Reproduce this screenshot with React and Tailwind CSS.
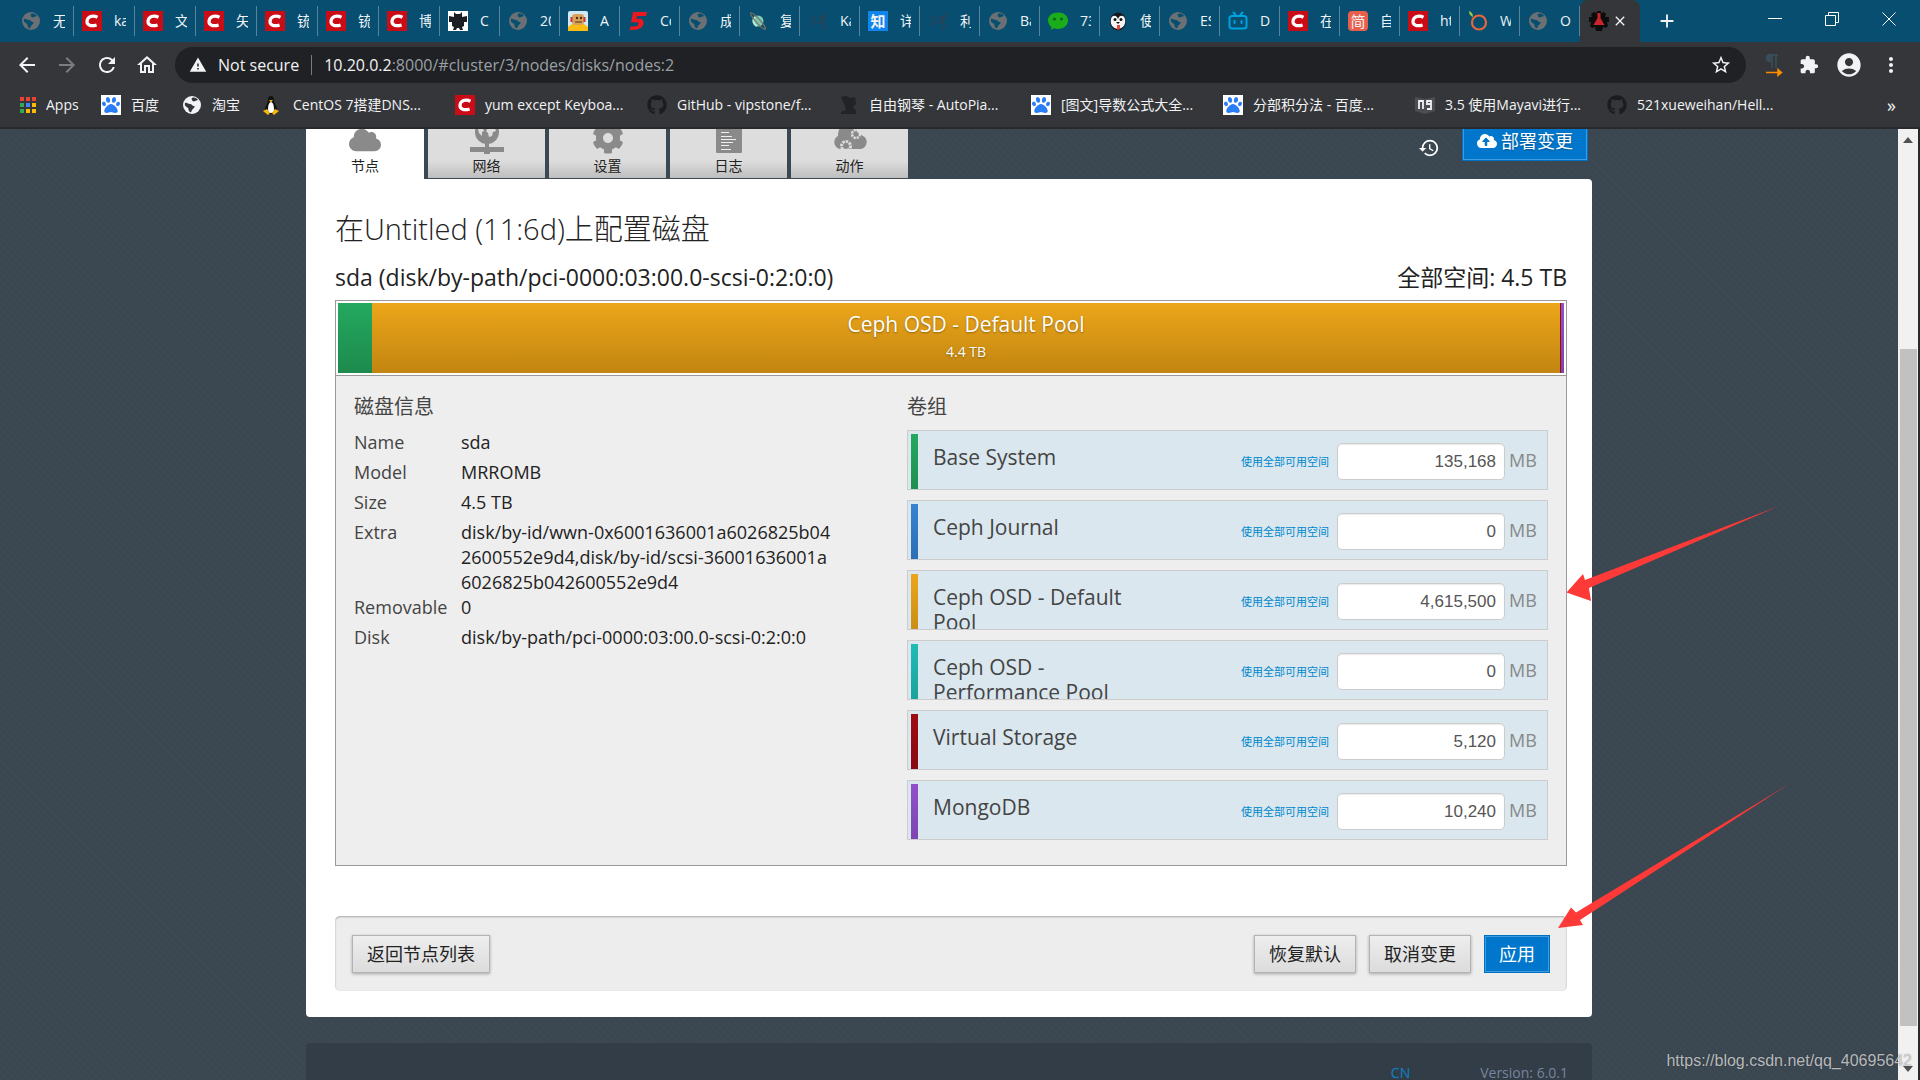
import React, { useState } from 'react';
import { FaCloud, FaCloudUploadAlt, FaCog, FaGithub, FaPaw } from 'react-icons/fa';
import {
  MdArrowBack, MdArrowForward, MdRefresh, MdOutlineHome, MdWarning, MdStarBorder, MdMoreVert,
  MdAccountCircle, MdAdd, MdClose, MdExtension, MdHistory,
} from 'react-icons/md';

/* ---------- favicons ---------- */

const Globe = ({ light }) => (
  <svg viewBox="0 0 20 20" className="h-5 w-5 shrink-0">
    <circle cx="10" cy="10" r="9" fill={light ? '#f1f3f4' : '#6b7074'} />
    <path
      d="M3 8c2-1 3 1 5 1s2 2 4 2-1 3-2 4 0 3-2 2-1-3-2-4-4-2-3-5zM10 3c2-1 5 0 6 2l-3 1c-1 1-3 0-3-1s-1-1 0-2z"
      fill={light ? '#35363a' : '#074e70'}
    />
  </svg>
);

const RedC = () => (
  <svg viewBox="0 0 20 20" className="h-5 w-5 shrink-0">
    <rect width="20" height="20" fill="#ca0c16" />
    <path d="M15.5 6.2C10.500 3.800 5.500 5.500 5 10.200c-.3 4 4 5.600 9.600 3.700" fill="none" stroke="#fff" strokeWidth="3.200" />
  </svg>
);

const Baidu = () => (
  <span className="flex h-5 w-5 shrink-0 items-center justify-center bg-white">
    <FaPaw className="h-[18px] w-[18px] text-[#2b7df3]" />
  </span>
);

const Bat = () => (
  <svg viewBox="0 0 20 20" className="h-5 w-5 shrink-0">
    <rect width="20" height="20" fill="#fff" />
    <path d="M6 1l2 2h4l2-2 0 5 5-1 0 6-3 0 0 4-2 1 1 3h-3l-1-2h-2l-1 2H5l1-3-2-1 0-4-3 0 0-6 5 1z" fill="#1b1f23" />
  </svg>
);

const Robot = () => (
  <svg viewBox="0 0 20 20" className="h-5 w-5 shrink-0">
    <rect width="20" height="20" rx="2" fill="#cfe9f7" />
    <path d="M0 20v-4l4-3h12l4 3v4z" fill="#fbbc13" />
    <rect x="4" y="3" width="12" height="11" rx="3" fill="#d9a35b" />
    <rect x="2.500" y="6" width="2" height="5" fill="#c33" />
    <rect x="15.500" y="6" width="2" height="5" fill="#c33" />
    <circle cx="9" cy="7" r="1.200" fill="#4a2f13" />
    <circle cx="13" cy="7" r="1.200" fill="#4a2f13" />
    <path d="M7 11h7" stroke="#4a2f13" />
  </svg>
);

const Five = () => (
  <svg viewBox="0 0 20 20" className="h-5 w-5 shrink-0">
    <path d="M5 1h14l-1 4H9l-.5 3c5-1 8 1 7 5-1 4-5 6-14 6l1-3.500c5 0 7.500-.5 8-2.500.4-2-2-2-7.500-1.500z" fill="#e8191f" />
  </svg>
);

const Saturn = () => (
  <svg viewBox="0 0 20 20" className="h-5 w-5 shrink-0">
    <circle cx="10" cy="10" r="5.500" fill="#7cc9b5" />
    <path d="M7 6a5.500 5.500 0 0 0 2 9" stroke="#b9e8d6" strokeWidth="2" fill="none" />
    <ellipse cx="10" cy="10" rx="11" ry="2" transform="rotate(48 10 10)" fill="none" stroke="#7d7360" strokeWidth="1.200" />
  </svg>
);

const Squiggle = () => (
  <svg viewBox="0 0 20 20" className="h-5 w-5 shrink-0">
    <path d="M3 8c1-3 3-2 3 1s-1 5-4 4M9 12c3 0 7-1 7-4s-4-4-4-1 5 2 6-5M15 11c2 3 2 7-2 7" fill="none" stroke="#2b4355" strokeWidth="1.500" />
  </svg>
);

const Husky = () => (
  <svg viewBox="0 0 20 20" className="h-5 w-5 shrink-0">
    <ellipse cx="10" cy="10.500" rx="8" ry="9" fill="#16181b" />
    <path d="M3 8c1-4 4-4 6-2l1 2 1-2c2-2 5-2 6 2 1 5-1 9-7 10C4 17 2 13 3 8z" fill="#f4f4f4" />
    <circle cx="7" cy="8.500" r="1.500" fill="#111" />
    <circle cx="13" cy="8.500" r="1.500" fill="#111" />
    <path d="M8 11h4l-2 2z" fill="#111" />
    <path d="M9 14h3v4c-1 1-3 1-3 0z" fill="#e8453c" />
  </svg>
);

const Bili = () => (
  <svg viewBox="0 0 20 20" className="h-5 w-5 shrink-0" fill="none" stroke="#00a1e0" strokeWidth="2" strokeLinecap="round">
    <rect x="1.500" y="5" width="17" height="12.500" rx="2.500" />
    <path d="M5.500 1.500L8 4.500M14.500 1.500L12 4.500M6.500 10v2M13.500 10v2" />
  </svg>
);

const Orange = () => (
  <svg viewBox="0 0 20 20" className="h-5 w-5 shrink-0">
    <circle cx="11" cy="11.500" r="7" fill="none" stroke="#e8663c" strokeWidth="2.200" />
    <path d="M1 0c3 1 4 3 4 6C2 5 1 3 1 0z" fill="#9bc53d" />
  </svg>
);

const Penguin = () => (
  <svg viewBox="0 0 20 20" className="h-5 w-5 shrink-0">
    <path d="M8 1c-3 0-3 3-3 5s-3 5-3 8 2 5 6 5 6-2 6-5-3-6-3-8 0-5-3-5z" fill="#111" />
    <path d="M8 7c-2 0-3 4-3 7s1 4 3 4 3-1 3-4-1-7-3-7z" fill="#fff" />
    <path d="M6 5h4L8 7.500zM0 16l4-2 3 4-2 2zM16 16l-4-2-3 4 2 2z" fill="#f5b90a" />
  </svg>
);

const Piano = () => (
  <svg viewBox="0 0 20 20" className="h-5 w-5 shrink-0">
    <path d="M2 2c4-2 7-1 9 1l5-1 1 7-3 3 3 4v3H2v-2l5-2-1-4z" fill="#222326" />
  </svg>
);

const Book = () => (
  <svg viewBox="0 0 20 20" className="h-5 w-5 shrink-0">
    <path d="M0 2l10 2 10-2v14l-10 3-10-3z" fill="#4d4e52" />
    <path d="M4 14V6h4v8M16 9h-4V6h4v8h-4" fill="none" stroke="#f1f1f1" strokeWidth="1.800" />
  </svg>
);

const Flask = () => (
  <svg viewBox="0 0 20 20" className="h-5 w-5 shrink-0">
    <path d="M8 0h4v2l3-1 2 2-1 3h4v5h-2l1 4-2 2-3-1-1 4H7l-1-4-3 1-2-2 1-4H0V6h3L2 3l3-2 3 1z" fill="#0c0c0c" />
    <path d="M8.500 2h3v5l4 7h-11l4-7z" fill="#c9252c" />
  </svg>
);

const WeChat = () => (
  <svg viewBox="0 0 20 20" className="h-5 w-5 shrink-0">
    <path d="M10 1.500c6 0 10 3.500 10 8s-4 8.500-10 8.500c-1.500 0-3-.2-4-.7L3 19l.5-3C1.500 14.500 0 12 0 9.500c0-4.500 4-8 10-8z" fill="#1aad19" />
    <circle cx="6.500" cy="8" r="1.500" fill="#0b5d2a" />
    <circle cx="13.500" cy="8" r="1.500" fill="#0b5d2a" />
  </svg>
);

const Zhi = () => <span className="flex h-5 w-5 shrink-0 items-center justify-center bg-[#1185ee] text-[15px] font-bold">知</span>;
const Jian = () => <span className="flex h-5 w-5 shrink-0 items-center justify-center rounded-sm bg-[#e8604c] text-[15px]">简</span>;
const GitHub = () => <FaGithub className="h-5 w-5 shrink-0 text-[#1b1c1f]" />;

const Apps = () => (
  <svg viewBox="0 0 16 16" className="h-4 w-4 shrink-0">
    {['#ea4335', '#ea4335', '#ea4335', '#34a853', '#4285f4', '#fbbc05', '#34a853', '#fbbc05', '#fbbc05'].map((c, i) => (
      <rect key={i} x={(i % 3) * 6} y={Math.floor(i / 3) * 6} width="4" height="4" fill={c} />
    ))}
  </svg>
);

/* ---------- browser data ---------- */

const wideTabs = [
  [Globe, '无'], [RedC, 'ka'], [RedC, '文'], [RedC, '矢'], [RedC, '铳'], [RedC, '铳'], [RedC, '博'],
];

const tabs = [
  [Bat, 'C'], [Globe, '20'], [Robot, 'A'], [Five, 'Co'], [Globe, '成'], [Saturn, '复'], [Squiggle, 'Ka'],
  [Zhi, '详'], [Squiggle, '利'], [Globe, 'Ba'], [WeChat, '73'], [Husky, '使'], [Globe, 'ES'], [Bili, 'D'],
  [RedC, '在'], [Jian, '自'], [RedC, 'ht'], [Orange, 'W'], [Globe, 'O'],
];

const LightGlobe = () => <Globe light />;

const shortBookmarks = [[Apps, 'Apps'], [Baidu, '百度'], [LightGlobe, '淘宝']];

const bookmarks = [
  [Penguin, 'CentOS 7搭建DNS...'],
  [RedC, 'yum except Keyboa...'],
  [GitHub, 'GitHub - vipstone/f...'],
  [Piano, '自由钢琴 - AutoPia...'],
  [Baidu, '[图文]导数公式大全...'],
  [Baidu, '分部积分法 - 百度...'],
  [Book, '3.5 使用Mayavi进行...'],
  [GitHub, '521xueweihan/Hell...'],
];

const BrowserTab = ({ icon: Icon, label, width }) => (
  <button type="button" className={`flex h-[30px] min-w-0 items-center border-r border-[#5a8299] pl-2 pr-2 text-left ${width}`}>
    <Icon />
    <span className="ml-3 min-w-0 flex-1 overflow-hidden whitespace-nowrap text-sm">{label}</span>
  </button>
);

const Bookmark = ({ icon: Icon, label, width }) => (
  <a href="#" className={`flex shrink-0 items-center gap-[10px] whitespace-nowrap ${width}`}>
    <Icon />
    {label}
  </a>
);

const Browser = () => (
  <header className="shrink-0 border-b-2 border-[#28292c] bg-[#35363a] text-[#f1f3f4]">
    <div className="flex h-[42px] items-center bg-[#074e70] pl-[13px]">
      {wideTabs.map(([icon, label], i) => (
        <BrowserTab key={i} icon={icon} label={label} width="w-[61px]" />
      ))}
      {tabs.map(([icon, label], i) => (
        <BrowserTab key={i} icon={icon} label={label} width="w-[60px]" />
      ))}
      <div className="flex h-full w-[60px] shrink-0 items-center justify-center gap-[3px] rounded-t-lg bg-[#35363a] pr-1">
        <Flask />
        <button type="button" aria-label="Close tab"><MdClose className="h-4 w-4" /></button>
      </div>
      <button type="button" aria-label="New tab" className="ml-4"><MdAdd className="h-[22px] w-[22px]" /></button>
      <div className="ml-auto flex items-center gap-[43px] pb-1 pr-6">
        <button type="button" aria-label="Minimize">
          <svg viewBox="0 0 14 14" className="h-[14px] w-[14px]"><path d="M0 6.500h14" stroke="#fff" /></svg>
        </button>
        <button type="button" aria-label="Restore">
          <svg viewBox="0 0 14 14" className="h-[14px] w-[14px]" fill="none" stroke="#fff">
            <path d="M.5 3.500h10v10H.5zM3.500 3V.5h10v10H11" />
          </svg>
        </button>
        <button type="button" aria-label="Close">
          <svg viewBox="0 0 14 14" className="h-[14px] w-[14px]" stroke="#fff"><path d="M.5.5l13 13M13.500.5l-13 13" /></svg>
        </button>
      </div>
    </div>

    <div className="flex h-[46px] items-center pl-[15px] pr-[17px]">
      <div className="flex w-40 items-center gap-4">
        <button type="button" aria-label="Back"><MdArrowBack className="h-6 w-6" /></button>
        <button type="button" aria-label="Forward"><MdArrowForward className="h-6 w-6 text-[#7b7c7f]" /></button>
        <button type="button" aria-label="Reload"><MdRefresh className="h-6 w-6" /></button>
        <button type="button" aria-label="Home"><MdOutlineHome className="h-6 w-6" /></button>
      </div>
      <div className="flex h-9 flex-1 items-center rounded-full bg-[#202124] pl-[14px] pr-[14px] text-base">
        <MdWarning className="h-[18px] w-[18px]" />
        <span className="ml-[11px]">Not secure</span>
        <span className="mx-3 h-5 w-px bg-[#7b7c7f]" />
        <span>10.20.0.2<span className="text-[#9aa0a6]">:8000/#cluster/3/nodes/disks/nodes:2</span></span>
        <button type="button" aria-label="Bookmark this page" className="ml-auto"><MdStarBorder className="h-[22px] w-[22px]" /></button>
      </div>
      <div className="ml-[19px] flex items-center gap-4">
        <svg viewBox="0 0 18 24" className="h-6 w-[18px]">
          <path d="M5 1.500a3 3 0 0 0 0 7zM5 2h8M7 2v13M11 2v13" fill="#39505c" stroke="#39505c" strokeWidth="1.500" />
          <path d="M1 19.500h12M13 16.500l3.500 3-3.500 3z" fill="#ff8c00" stroke="#ff8c00" strokeWidth="1.500" />
        </svg>
        <button type="button" aria-label="Extensions"><MdExtension className="h-5 w-5" /></button>
        <button type="button" aria-label="Profile"><MdAccountCircle className="h-7 w-7" /></button>
        <button type="button" aria-label="Menu"><MdMoreVert className="h-6 w-6" /></button>
      </div>
    </div>

    <nav className="flex h-[39px] items-center overflow-hidden pb-[5px] pl-5 pr-6 text-sm">
      {shortBookmarks.map(([icon, label], i) => (
        <Bookmark key={i} icon={icon} label={label} width="w-[81px]" />
      ))}
      {bookmarks.map(([icon, label], i) => (
        <Bookmark key={i} icon={icon} label={label} width="w-[192px]" />
      ))}
      <button type="button" aria-label="More bookmarks" className="ml-auto text-lg">»</button>
    </nav>
  </header>
);

/* ---------- section tab icons ---------- */

const NetworkIcon = () => (
  <svg viewBox="0 0 34 40" className="h-10 w-[34px] shrink-0">
    <circle cx="17" cy="16" r="12" fill="#8a8a8a" />
    <path d="M8 13c1-3 3-5 6-5l1 3-2 2 1 2-2 1 0 4-3-3zM18 8c4 0 7 3 8 7l-3 1-1 4-3 1-1-4-2-2 2-3z" fill="#ddd" />
    <path d="M15 27h4v4h15v5H20v2h-6v-2H0v-5h15z" fill="#8a8a8a" />
  </svg>
);

const LogIcon = () => (
  <svg viewBox="0 0 26 40" className="h-10 w-[26px] shrink-0">
    <rect y="1" width="26" height="36" rx="1" fill="#8a8a8a" />
    <path d="M5 12.500h8M5 16.500h8M5 20.500h11M5 23.500h15M5 26.500h12M5 29.500h8M5 33.500h10" stroke="#eee" strokeWidth="1.200" />
  </svg>
);

const ActionIcon = () => (
  <svg viewBox="0 0 34 40" className="h-10 w-[34px] shrink-0">
    <path d="M7 33a7 7 0 0 1-2-13C5 12 9 8 15 8c5 0 8 4 9 8l6 4a7 7 0 0 1-2 13z" fill="#8a8a8a" />
    <circle cx="23" cy="18" r="4" fill="none" stroke="#ddd" strokeWidth="2.500" strokeDasharray="2.200 1" />
    <circle cx="13" cy="30" r="4.500" fill="none" stroke="#ddd" strokeWidth="3" strokeDasharray="2.400 1" />
  </svg>
);

const sections = [
  { id: 'nodes', label: '节点', icon: <FaCloud className="h-8 w-8 shrink-0 text-[#8a8a8a]" /> },
  { id: 'network', label: '网络', icon: <NetworkIcon /> },
  { id: 'settings', label: '设置', icon: <FaCog className="h-9 w-8 shrink-0 text-[#8a8a8a]" /> },
  { id: 'logs', label: '日志', icon: <LogIcon /> },
  { id: 'actions', label: '动作', icon: <ActionIcon /> },
];

/* ---------- disk data ---------- */

const diskInfo = [
  ['Name', 'sda'],
  ['Model', 'MRROMB'],
  ['Size', '4.5 TB'],
  ['Extra', 'disk/by-id/wwn-0x6001636001a6026825b042600552e9d4,disk/by-id/scsi-36001636001a6026825b042600552e9d4'],
  ['Removable', '0'],
  ['Disk', 'disk/by-path/pci-0000:03:00.0-scsi-0:2:0:0'],
];

const volumes = [
  { id: 'os', name: 'Base System', size: '135,168', color: 'from-[#24a95f] to-[#1e8f50]' },
  { id: 'journal', name: 'Ceph Journal', size: '0', color: 'from-[#3583d3] to-[#2c6fb5]' },
  { id: 'osd', name: 'Ceph OSD - Default Pool', size: '4,615,500', color: 'from-[#eca61a] to-[#cb8e14]' },
  { id: 'perf', name: 'Ceph OSD - Performance Pool', size: '0', color: 'from-[#1fbcb4] to-[#1aa39c]' },
  { id: 'vm', name: 'Virtual Storage', size: '5,120', color: 'from-[#a00b12] to-[#870a10]' },
  { id: 'mongo', name: 'MongoDB', size: '10,240', color: 'from-[#9150cb] to-[#7d45b0]' },
];

const VolumeRow = ({ volume, value, onChange }) => (
  <div className="flex h-[60px] overflow-hidden border border-[#ccc] bg-[#dae7ef] pl-[3px] pr-[10px]">
    <div className={`mt-[3px] w-[7px] shrink-0 bg-linear-to-b ${volume.color}`} />
    <label htmlFor={volume.id} className="ml-[15px] mt-[14px] w-[210px] text-[21px] leading-[25px] text-[#444]">
      {volume.name}
    </label>
    <div className="ml-auto flex items-center">
      <button type="button" className="mt-1 text-[11px] text-[#0088cc]">使用全部可用空间</button>
      <input
        id={volume.id}
        type="text"
        value={value}
        onChange={(e) => onChange(volume.id, e.target.value)}
        className="ml-2 mt-[3px] h-[37px] w-[168px] rounded-[5px] border border-[#ccc] bg-white px-2 text-right font-['Liberation_Sans',sans-serif] text-[17px] text-[#555] shadow-[inset_0_1px_1px_rgba(0,0,0,0.08)]"
      />
      <span className="ml-1 w-7 text-lg text-[#888]">MB</span>
    </div>
  </div>
);

const GrayButton = ({ children }) => (
  <button
    type="button"
    className="h-[38px] border border-[#b3b3b3] bg-linear-to-b from-[#eee] to-[#dcdcdc] px-[14px] text-lg leading-none text-[#222] shadow-[0_1px_3px_rgba(0,0,0,0.3)]"
  >
    {children}
  </button>
);

const ScrollBar = () => (
  <div className="flex w-5 shrink-0 flex-col items-center bg-[#f1f1f1]">
    <svg viewBox="0 0 10 6" className="my-2 h-[6px] w-[10px]"><path d="M0 6l5-6 5 6z" fill="#505050" /></svg>
    <div className="grow-[198]" />
    <div className="w-[17px] grow-[678] bg-[#c1c1c1]" />
    <div className="grow-[32]" />
    <svg viewBox="0 0 10 6" className="my-2 h-[6px] w-[10px]"><path d="M0 0l5 6 5-6z" fill="#505050" /></svg>
  </div>
);

export default function App() {
  const [active, setActive] = useState('nodes');
  const [sizes, setSizes] = useState(Object.fromEntries(volumes.map((v) => [v.id, v.size])));

  const updateSize = (id, value) => setSizes({ ...sizes, [id]: value });

  return (
    <div className="relative flex h-screen flex-col overflow-hidden font-['Open_Sans','Noto_Sans_CJK_SC',sans-serif]">
      <Browser />

      <div className="flex min-h-0 flex-1 border-r-2 border-[#28292c]">
        <div className="flex min-w-0 flex-1 flex-col bg-[#3a4650] bg-[repeating-linear-gradient(45deg,rgba(255,255,255,0.01)_0_2px,transparent_2px_5px)]">
          <div className="mx-auto flex w-full max-w-[1286px] flex-1 flex-col">
            <div className="flex h-[50px] shrink-0 items-end justify-between">
              <div className="flex h-full gap-1">
                {sections.map((s) => (
                  <button
                    key={s.id}
                    type="button"
                    onClick={() => setActive(s.id)}
                    className={`flex flex-col items-center justify-end overflow-hidden text-sm text-[#222] ${
                      active === s.id
                        ? 'h-[50px] w-[118px] bg-white pb-[3px]'
                        : 'h-[49px] w-[117px] bg-linear-to-b from-[#ddd] from-65% to-[#bebebe] pb-[2px]'
                    }`}
                  >
                    {s.icon}
                    {s.label}
                  </button>
                ))}
              </div>
              <div className="flex h-full items-start gap-[22px] pr-1">
                <button type="button" aria-label="History" className="mt-2"><MdHistory className="h-[22px] w-[22px] text-white" /></button>
                <div className="h-8 overflow-hidden">
                  <button
                    type="button"
                    className="-mt-2 flex h-10 items-center gap-1 border border-[#0070c0] bg-[#0077cc] px-[14px] text-lg leading-none text-white shadow-[inset_0_0_0_1px_#3f9be0] [text-shadow:0_1px_2px_rgba(0,0,0,0.3)]"
                  >
                    <FaCloudUploadAlt className="h-5 w-5" />
                    部署变更
                  </button>
                </div>
              </div>
            </div>

            <main className="rounded-b rounded-tr bg-white pb-[26px] pl-[29px] pr-[25px] pt-7">
              <h1 className="text-[29px] font-light leading-[44px] text-[#222]">在Untitled (11:6d)上配置磁盘</h1>

              <div className="mt-2 flex h-[41px] justify-between text-[23px] leading-[36px] text-[#222]">
                <h2>sda (disk/by-path/pci-0000:03:00.0-scsi-0:2:0:0)</h2>
                <span>全部空间: 4.5 TB</span>
              </div>

              <section className="border border-[#999] bg-[#eee]">
                <div className="flex h-[75px] border-b border-[#999] bg-white p-[2px] text-white">
                  <div className="w-[34px] bg-linear-to-b from-[#24a95f] to-[#1d8a4d]" />
                  <div className="flex-1 bg-linear-to-b from-[#eca61a] to-[#c28510] pt-[7px] text-center [text-shadow:0_1px_2px_rgba(0,0,0,0.35)]">
                    <div className="text-[21px] leading-7">Ceph OSD - Default Pool</div>
                    <div className="text-sm leading-7">4.4 TB</div>
                  </div>
                  <div className="w-px bg-[#a00b12]" />
                  <div className="w-[3px] bg-linear-to-b from-[#9150cb] to-[#7d45b0]" />
                </div>

                <div className="flex justify-between px-[18px] pb-[25px] pt-4">
                  <div>
                    <h3 className="text-xl leading-[30px] text-[#444]">磁盘信息</h3>
                    <dl className="mt-2 text-lg leading-[25px]">
                      {diskInfo.map(([label, value]) => (
                        <div key={label} className="flex min-h-[30px]">
                          <dt className="w-[107px] shrink-0 text-[#444]">{label}</dt>
                          <dd className="w-[373px] break-all text-[#222]">{value}</dd>
                        </div>
                      ))}
                    </dl>
                  </div>

                  <div className="w-[641px]">
                    <h3 className="text-xl leading-[30px] text-[#444]">卷组</h3>
                    <div className="mt-2 flex flex-col gap-[10px]">
                      {volumes.map((v) => (
                        <VolumeRow key={v.id} volume={v} value={sizes[v.id]} onChange={updateSize} />
                      ))}
                    </div>
                  </div>
                </div>
              </section>

              <div className="mt-[50px] flex h-[75px] items-center justify-between rounded-[5px] bg-[#ededed] px-[17px] shadow-[inset_0_1px_2px_rgba(0,0,0,0.3)]">
                <GrayButton>返回节点列表</GrayButton>
                <div className="flex gap-[13px]">
                  <GrayButton>恢复默认</GrayButton>
                  <GrayButton>取消变更</GrayButton>
                  <button
                    type="button"
                    className="h-[38px] border border-[#0070c0] bg-[#0077cc] px-[14px] text-lg leading-none text-white shadow-[inset_0_0_0_1px_#3f9be0]"
                  >
                    应用
                  </button>
                </div>
              </div>
            </main>

            <footer className="mt-[26px] flex min-h-0 flex-1 justify-end gap-[70px] overflow-hidden rounded-t bg-[#333d47] pr-6 pt-5 text-sm">
              <a href="#" className="text-[#0a84c8]">CN</a>
              <span className="text-[#75859b]">Version: 6.0.1</span>
            </footer>
          </div>
        </div>
        <ScrollBar />
      </div>

      {/* pointer arrows drawn over the page */}
      <svg viewBox="0 0 240 430" className="pointer-events-none absolute left-[1557px] top-[506px] h-[430px] w-[240px]" fill="#fd3a37">
        <path d="M9.500 86.500L26 68l2 6L221 .5 32 82l2 13z" />
        <path d="M1 422l13-20.500 5 5L232 278 23 414l3 5z" />
      </svg>
      <span className="absolute bottom-[7px] right-2 font-['Liberation_Sans',sans-serif] text-base text-white/70 [text-shadow:0_0_1px_rgba(0,0,0,0.6)]">
        https://blog.csdn.net/qq_40695642
      </span>
    </div>
  );
}
